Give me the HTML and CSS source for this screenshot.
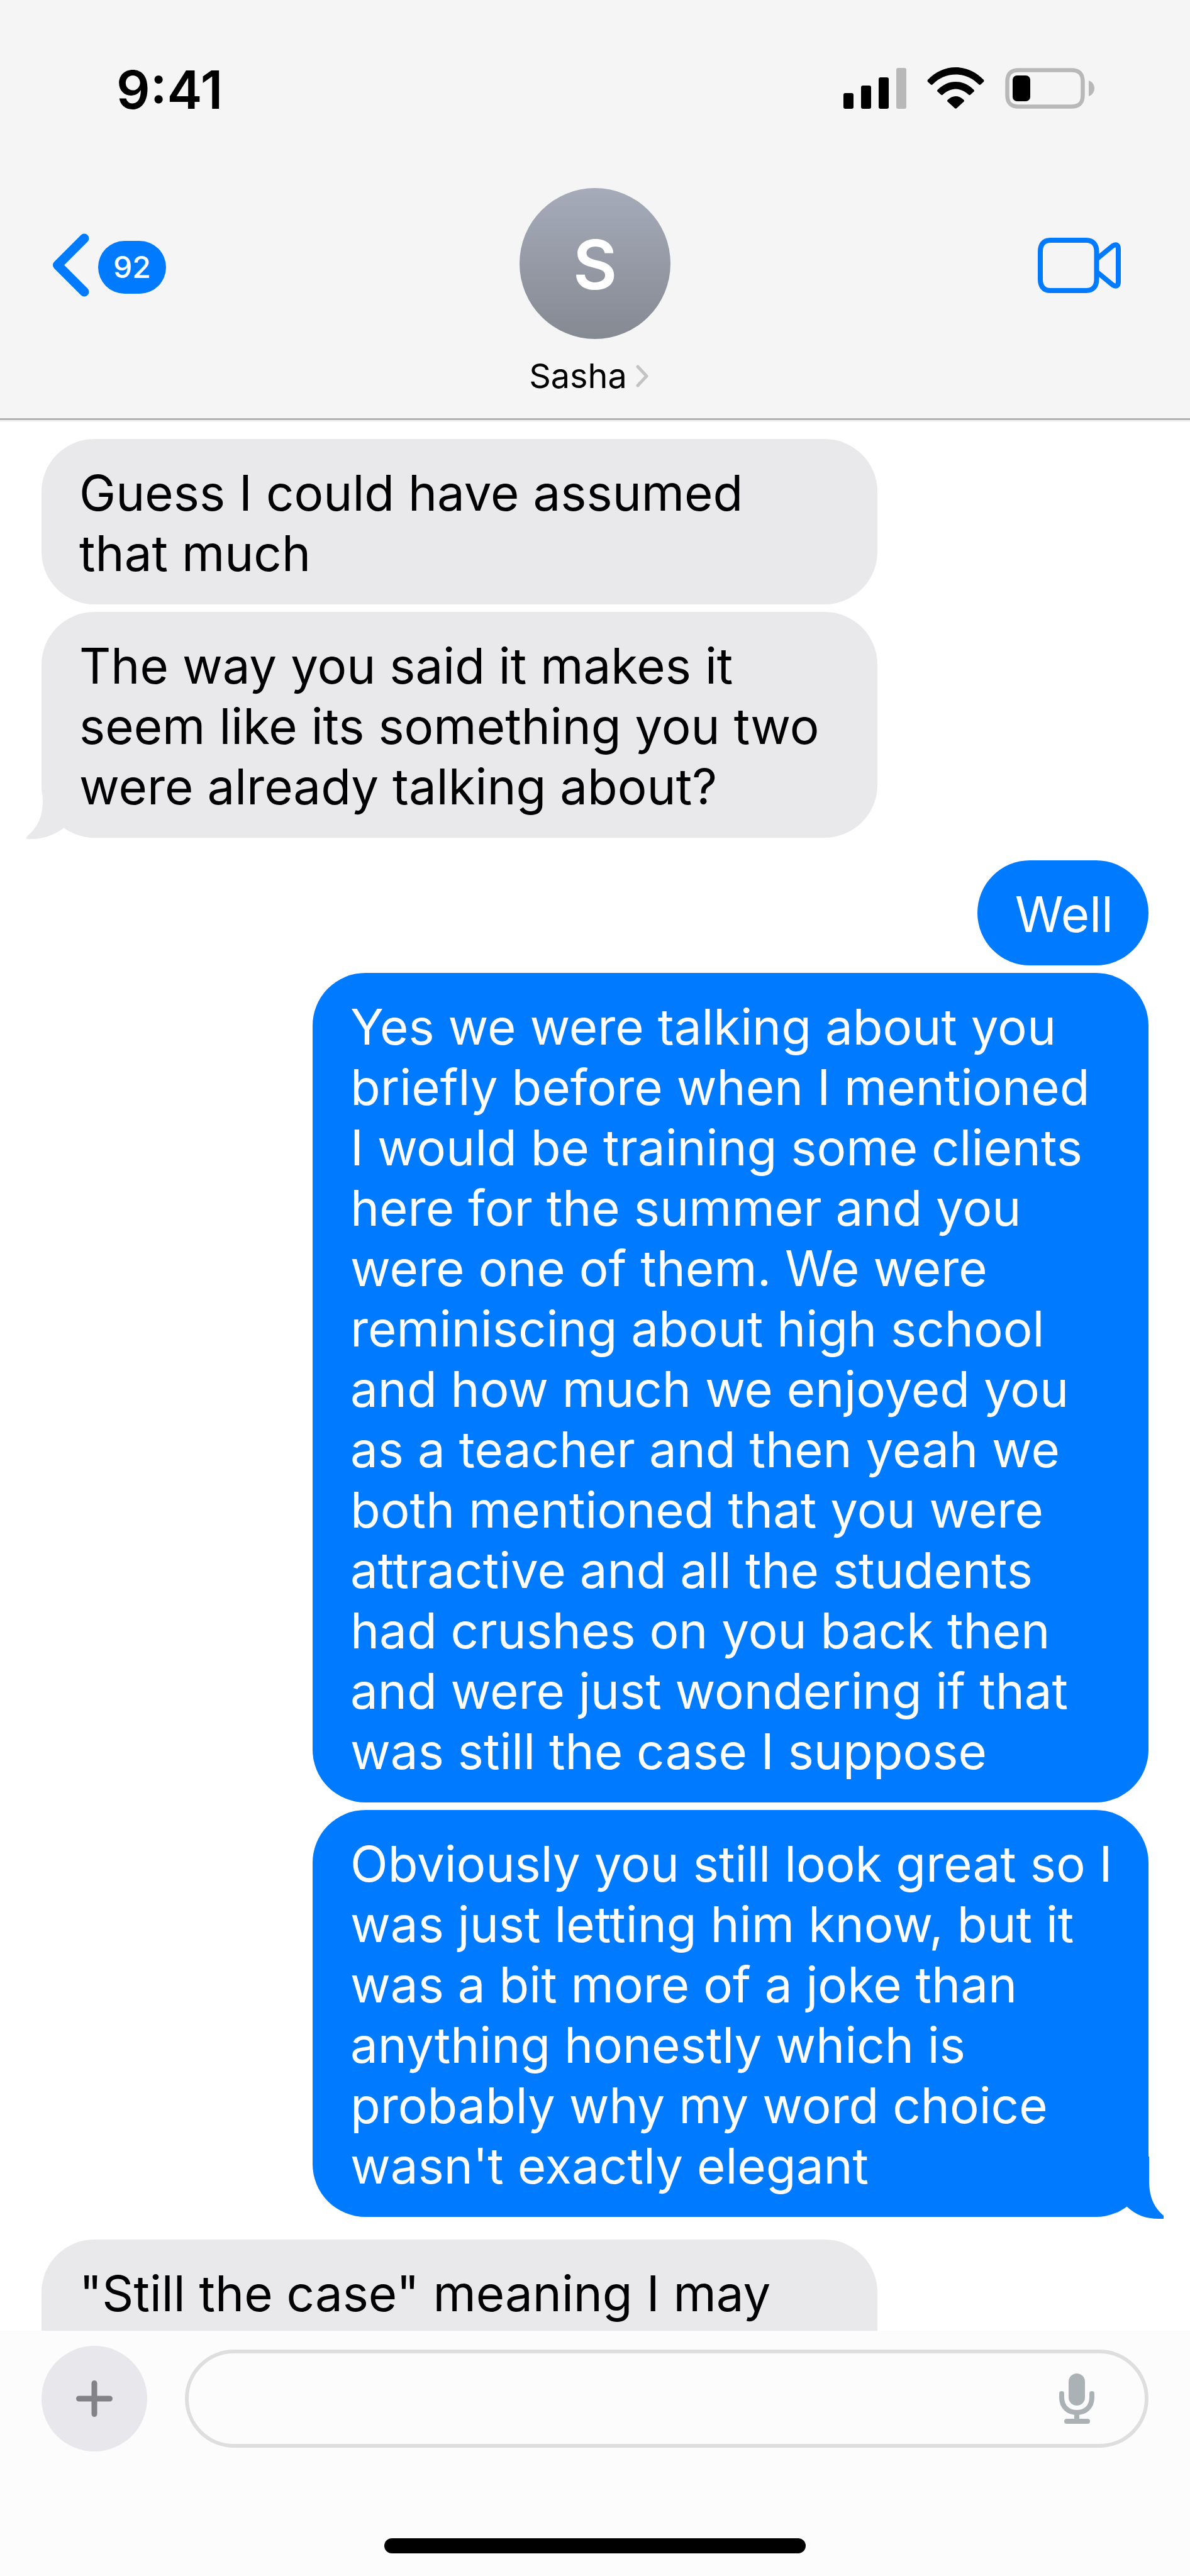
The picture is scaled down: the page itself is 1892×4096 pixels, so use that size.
FILE: index.html
```html
<!DOCTYPE html>
<html lang="en">
<head>
    <meta charset="UTF-8">
    <meta name="viewport" content="width=device-width, initial-scale=1.0">
    <title>Sasha - Messages</title>
    <link rel="stylesheet" href="styles.css">
</head>
<body>

    <div class="phone">
        <header class="header">
            <!-- Status bar -->
            <div class="status">
                <span class="time">9:41</span>
                <div class="status-icons">
                    <svg class="signal" viewBox="0 0 100 65" aria-hidden="true">
                        <rect x="0" y="40" width="16" height="25" rx="3"/>
                        <rect x="28" y="28" width="16" height="37" rx="3"/>
                        <rect x="56" y="15" width="16" height="50" rx="3"/>
                        <rect x="84" y="0" width="16" height="65" rx="3" fill="#b8b8b8"/>
                    </svg>
                    <svg class="wifi" viewBox="0 0 91 66" aria-hidden="true">
                        <path d="M1 20Q0 21.500 1 23L6 27.500Q7.500 28.500 9 27C19 17 31 11.500 45.500 11.500S72 17 82 27Q83.500 28.500 85 27.500L90 23Q91 21.500 90 20C78 7 62 0 45.500 0S13 7 1 20Z"/>
                        <path d="M16.500 36Q15.500 37.500 16.500 38.500L22 43.500Q23.500 45 25 43.500C31 38 38 34.500 45.500 34.500S60 38 66 43.500Q67.500 45 69 43.500L74.500 38.500Q75.500 37.500 74.500 36C66 27.500 56 23 45.500 23S25 27.500 16.500 36Z"/>
                        <path d="M32.500 52Q31.500 53.500 32.500 54.500L44 65Q45.500 66.500 47 65L58.500 54.500Q59.500 53.500 58.500 52C54.500 48 50 46 45.500 46S36.500 48 32.500 52Z"/>
                    </svg>
                    <svg class="battery" viewBox="0 0 142 65" aria-hidden="true">
                        <path d="M22 3.500H105C118 3.500 123.500 9 123.500 22V43C123.500 56 118 61.500 105 61.500H22C9 61.500 3.500 56 3.500 43V22C3.500 9 9 3.500 22 3.500Z" fill="none" stroke="#b8b8b8" stroke-width="6.500"/>
                        <path d="M133 20C139 22 142 27 142 32.500S139 43 133 45Z" fill="#b8b8b8"/>
                        <rect x="12" y="12" width="28" height="41" rx="7"/>
                    </svg>
                </div>
            </div>

            <!-- Contact bar -->
            <div class="contact-bar">
                <a class="back" href="#" aria-label="Back">
                    <svg class="back-arrow" viewBox="0 0 59 101" aria-hidden="true">
                        <path d="M51 8L8.500 50.500L51 93" fill="none" stroke="#007aff" stroke-width="15" stroke-linecap="round" stroke-linejoin="round"/>
                    </svg>
                    <span class="badge">92</span>
                </a>
                <a class="contact" href="#">
                    <span class="avatar">S</span>
                    <span class="name">Sasha
                        <svg class="name-arrow" viewBox="0 0 20 36" aria-hidden="true">
                            <path d="M3 3L17 18L3 33" fill="none" stroke="#c3c3c4" stroke-width="5" stroke-linecap="round" stroke-linejoin="round"/>
                        </svg>
                    </span>
                </a>
                <button class="video" type="button" aria-label="Video call">
                    <svg viewBox="0 0 132 88" aria-hidden="true">
                        <path d="M20 4H77C88 4 93.500 11 93.500 22V66C93.500 77 88 84 77 84H20C9 84 4 77 4 66V22C4 11 9 4 20 4Z" fill="none" stroke="#007aff" stroke-width="8"/>
                        <path d="M93.500 34L119 13Q128 8 128 18V70Q128 80 119 75L93.500 54" fill="none" stroke="#007aff" stroke-width="8"/>
                    </svg>
                </button>
            </div>
        </header>

        <!-- Conversation -->
        <main class="messages">
            <p class="bubble received">Guess I could have assumed that much</p>
            <p class="bubble received last">The way you said it makes it seem like its something you two were already talking about?
                <svg class="tail" viewBox="0 0 60 84" aria-hidden="true">
                    <path d="M60 0H25C25 8 27 12 27 20C27 48 20 63 1 80Q0 82.500 3 83C22 84.500 42 79 60 66Z"/>
                </svg>
            </p>
            <p class="bubble sent">Well</p>
            <p class="bubble sent">Yes we were talking about you briefly before when I mentioned I would be training some clients here for the summer and you were one of them. We were reminiscing about high school and how much we enjoyed you as a teacher and then yeah we both mentioned that you were attractive and all the students had crushes on you back then and were just wondering if that was still the case I suppose</p>
            <p class="bubble sent last">Obviously you still look great so I was just letting him know, but it was a bit more of a joke than anything honestly which is probably why my word choice wasn't exactly elegant
                <svg class="tail" viewBox="0 0 58 99" aria-hidden="true">
                    <path d="M0 0H35V38C35 65 43 81 58 94V99H50C30 99 14 93 0 80Z"/>
                </svg>
            </p>
            <p class="bubble received long">"Still the case" meaning I may</p>
        </main>

        <!-- Message field -->
        <footer class="footer">
            <div class="compose">
                <button class="add" type="button" aria-label="Add attachment">
                    <svg viewBox="0 0 58 58" aria-hidden="true">
                        <path d="M29 4.500V53.500M4.500 29H53.500" fill="none" stroke="#828287" stroke-width="9" stroke-linecap="round"/>
                    </svg>
                </button>
                <div class="field">
                    <input type="text" aria-label="Message">
                    <button class="mic" type="button" aria-label="Dictate">
                        <svg viewBox="0 0 56 80" aria-hidden="true">
                            <rect x="15" y="0" width="26" height="51" rx="13"/>
                            <path d="M4 32V38C4 53 14 62 28 62S52 53 52 38V32" fill="none" stroke="#aab2b5" stroke-width="8" stroke-linecap="round"/>
                            <rect x="24" y="62" width="8" height="12"/>
                            <rect x="8" y="72" width="41" height="8" rx="4"/>
                        </svg>
                    </button>
                </div>
            </div>
            <div class="home"></div>
        </footer>
    </div>

</body>
</html>
```
FILE: styles.css
```css
* {
    box-sizing: border-box;
}

body {
    margin: 0;
    font-family: Inter, sans-serif;
    color: #000;
    background-color: #fff;
}

.phone {
    display: flex;
    flex-direction: column;
    height: 100vh;
    overflow: hidden;
}

a {
    color: inherit;
    text-decoration: none;
}

button {
    padding: 0;
    border: none;
    background: none;
    cursor: pointer;
}

svg {
    display: block;
}

/* Header */
.header {
    padding-bottom: 32px;
    background-color: #f5f5f5;
    border-bottom: 3px solid #b2b2b2;
    box-shadow: 0 3px 0 #f5f5f5;
}

.status {
    display: flex;
    justify-content: space-between;
    align-items: center;
    height: 280px;
    padding: 0 152px 0 185px;
}

.time {
    padding-top: 6px;
    font-size: 84px;
    font-weight: 600;
    line-height: 100px;
}

.status-icons {
    display: flex;
    align-items: center;
    gap: 33px;
}

.signal {
    width: 100px;
}

.wifi {
    width: 91px;
}

.battery {
    width: 142px;
}

.contact-bar {
    display: grid;
    grid-template-columns: 1fr auto 1fr;
    align-items: start;
    padding: 19px 83px 0;
}

.back {
    display: flex;
    align-items: center;
    gap: 14px;
    height: 240px;
    padding-top: 4px;
}

.back-arrow {
    width: 59px;
}

.badge {
    margin-top: 8px;
    padding: 0 24px;
    border-radius: 42px;
    background-color: #007aff;
    color: #fff;
    font-size: 48px;
    font-weight: 500;
    line-height: 84px;
}

.contact {
    display: flex;
    flex-direction: column;
    align-items: center;
    gap: 24px;
}

.avatar {
    width: 240px;
    height: 240px;
    border-radius: 50%;
    background: linear-gradient(#a5abb9, #858992);
    color: #fff;
    font-size: 108px;
    font-weight: 600;
    line-height: 244px;
    text-align: center;
}

.name {
    display: flex;
    align-items: center;
    gap: 14px;
    padding-right: 20px;
    font-size: 54px;
    line-height: 70px;
}

.name-arrow {
    width: 20px;
}

.video {
    justify-self: end;
    width: 132px;
    height: 240px;
    margin-right: 27px;
    padding-top: 6px;
}

/* Messages */
.messages {
    display: flex;
    flex: 1;
    flex-direction: column;
    gap: 12px;
    min-height: 0;
    padding: 30px 66px 0;
    overflow: hidden;
}

.bubble {
    position: relative;
    flex: none;
    max-width: 1329px;
    margin: 0;
    padding: 38px 56px 33px 60px;
    border-radius: 84px;
    font-size: 78px;
    line-height: 96px;
}

.received {
    align-self: flex-start;
    background-color: #e9e9eb;
}

.sent {
    align-self: flex-end;
    background-color: #007aff;
    color: #fff;
}

/* Message that runs on below the message field */
.long {
    width: 100%;
    min-height: 264px;
}

.last {
    margin-bottom: 24px;
}

.tail {
    position: absolute;
    bottom: -3px;
}

.received .tail {
    left: -25px;
    width: 60px;
    fill: #e9e9eb;
}

.sent .tail {
    right: -24px;
    width: 58px;
    fill: #007aff;
}

/* Footer */
.footer {
    display: flex;
    flex-direction: column;
    justify-content: space-between;
    height: 390px;
    padding: 24px 66px 36px;
    background-color: #fcfcfc;
}

.compose {
    display: flex;
    align-items: center;
    gap: 60px;
}

.add {
    display: grid;
    place-items: center;
    width: 168px;
    height: 168px;
    border-radius: 50%;
    background-color: #e8e7ec;
}

.add svg {
    width: 58px;
}

.field {
    display: flex;
    flex: 1;
    align-items: center;
    height: 156px;
    padding: 0 80px 0 60px;
    border: 6px solid #dedede;
    border-radius: 78px;
}

.field input {
    flex: 1;
    min-width: 0;
    border: none;
    outline: none;
    background: none;
    font-family: inherit;
    font-size: 78px;
}

.mic svg {
    width: 56px;
    fill: #aab2b5;
}

.home {
    align-self: center;
    width: 670px;
    height: 24px;
    border-radius: 12px;
    background-color: #000;
}
```
